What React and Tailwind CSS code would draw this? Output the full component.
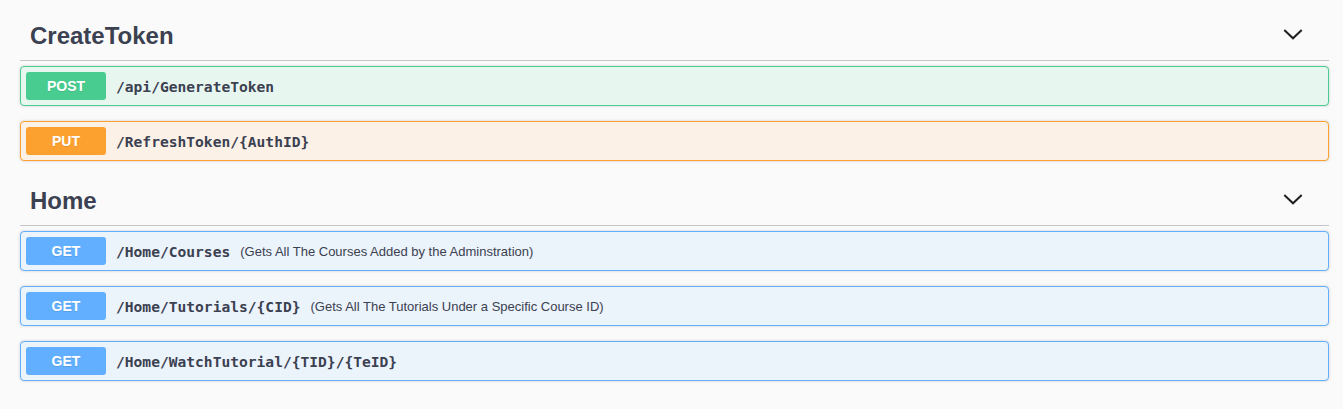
import React from "react";

const METHOD_STYLES = {
  POST: { block: "border-[#49cc90] bg-[#e8f6f0]", badge: "bg-[#49cc90]" },
  PUT: { block: "border-[#fca130] bg-[#fbf1e6]", badge: "bg-[#fca130]" },
  GET: { block: "border-[#61affe] bg-[#ebf3fb]", badge: "bg-[#61affe]" },
};

const SECTIONS = [
  {
    name: "CreateToken",
    ops: [
      { method: "POST", path: "/api/GenerateToken" },
      { method: "PUT", path: "/RefreshToken/{AuthID}" },
    ],
  },
  {
    name: "Home",
    ops: [
      { method: "GET", path: "/Home/Courses", desc: "(Gets All The Courses Added by the Adminstration)" },
      { method: "GET", path: "/Home/Tutorials/{CID}", desc: "(Gets All The Tutorials Under a Specific Course ID)" },
      { method: "GET", path: "/Home/WatchTutorial/{TID}/{TeID}" },
    ],
  },
];

const Chevron = () => (
  <svg width="20" height="20" viewBox="0 0 20 20" className="mr-[26px]">
    <path d="M1.3 4 L10 12.3 L18.7 4" fill="none" stroke="#1f1f1f" strokeWidth="2" />
  </svg>
);

const OpBlock = ({ method, path, desc }) => {
  const s = METHOD_STYLES[method];
  return (
    <div
      className={`mb-[15px] flex h-10 items-center rounded border px-[5px] shadow-[0_0_3px_rgba(0,0,0,0.19)] ${s.block}`}
    >
      <span
        className={`flex h-7 w-20 items-center justify-center rounded-[3px] font-['Liberation_Sans',Arial,sans-serif] text-sm font-bold text-white [text-shadow:0_1px_0_rgba(0,0,0,0.1)] ${s.badge}`}
      >
        {method}
      </span>
      <span className="px-[10px] pt-[2px] font-['DejaVu_Sans_Mono',monospace] text-[14.6px] font-bold text-[#3b4151]">
        {path}
      </span>
      {desc && (
        <span className="pt-[1px] font-['Liberation_Sans',Arial,sans-serif] text-[13px] text-[#3b4151]">
          {desc}
        </span>
      )}
    </div>
  );
};

export default function App() {
  return (
    <div className="min-h-[409px] bg-[#fafafa] pl-5 pr-[14px] pt-[11px]">
      {SECTIONS.map((sec) => (
        <section key={sec.name}>
          <div className="mb-[5px] flex h-[50px] items-center justify-between border-b border-[#c4c6cb] pl-[10px]">
            <h4 className="font-['Liberation_Sans',Arial,sans-serif] text-2xl font-bold text-[#3b4151]">
              {sec.name}
            </h4>
            <Chevron />
          </div>
          {sec.ops.map((op) => (
            <OpBlock key={op.path} {...op} />
          ))}
        </section>
      ))}
    </div>
  );
}
